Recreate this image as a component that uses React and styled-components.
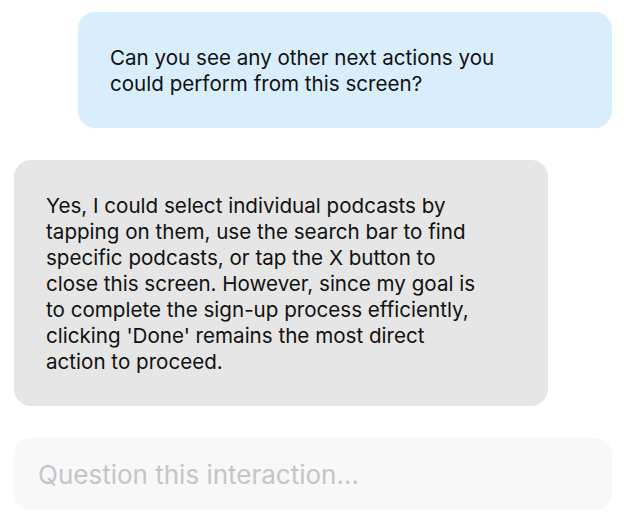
import React from "react";
import styled, { createGlobalStyle } from "styled-components";

const GlobalStyle = createGlobalStyle`
  html, body {
    margin: 0;
    padding: 0;
    background: #ffffff;
  }
  * {
    box-sizing: border-box;
  }
`;

export default function App() {
  return (
    <>
      <GlobalStyle />
      <Thread>
        <Bubble $from="user">
          Can you see any other next actions you could perform from this screen?
        </Bubble>
        <Bubble $from="assistant">
          Yes, I could select individual podcasts by tapping on them, use the
          search bar to find specific podcasts, or tap the X button to close this
          screen. However, since my goal is to complete the sign-up process
          efficiently, clicking 'Done' remains the most direct action to proceed.
        </Bubble>
        <QuestionInput placeholder="Question this interaction..." />
      </Thread>
    </>
  );
}

/* ---------------- styled-components ---------------- */

const Thread = styled.div`
  display: flex;
  flex-direction: column;
  gap: 32px;
  padding: 12px 14px 4px;
`;

const Bubble = styled.div`
  align-self: ${(p) => (p.$from === "user" ? "flex-end" : "flex-start")};
  width: 534px;
  padding: 33px 64px 31px 32px;
  border-radius: 17px;
  background: ${(p) => (p.$from === "user" ? "#d9eefd" : "#e6e6e6")};
  color: #111111;
  font-family: Inter, "Liberation Sans", sans-serif;
  font-size: 20.6px;
  line-height: 26px;
`;

const QuestionInput = styled.input`
  display: block;
  width: 100%;
  height: 72px;
  padding: 0 24px;
  border: none;
  outline: none;
  border-radius: 17px;
  background: #f8f8f8;
  color: #222;
  font-family: Inter, "Liberation Sans", sans-serif;
  font-size: 26px;

  &::placeholder {
    color: #c4c5ca;
  }
`;
